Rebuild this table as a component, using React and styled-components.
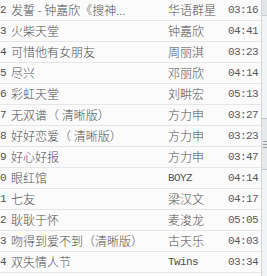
import React from "react";
import styled, { createGlobalStyle } from "styled-components";

const Global = createGlobalStyle`
  html, body { margin: 0; padding: 0; background: #ffffff; }
  body { font-family: "Noto Sans CJK SC", "Noto Sans", sans-serif; }
`;

const Frame = styled.div`
  width: 267px;
  height: 276px;
  overflow: hidden;
  display: flex;
  background: #fdfdfd;
`;

const List = styled.ul`
  flex: 1;
  margin: 0;
  padding: 0;
  list-style: none;
`;

const Row = styled.li`
  display: grid;
  grid-template-columns: 11px 157px 60px 30px;
  align-items: center;
  height: 20px;
  border-bottom: 1px solid #e4e6e8;
  background: #fbfbfb;
  color: #505050;
`;

const Index = styled.span`
  font-family: "Liberation Mono", monospace;
  font-size: 11px;
  letter-spacing: -0.6px;
  padding-left: 0;
  white-space: nowrap;
  line-height: 20px;
`;

const Title = styled.span`
  font-family: "Noto Sans CJK SC", "Noto Sans", sans-serif;
  font-size: 12px;
  font-weight: 300;
  line-height: 20px;
  white-space: nowrap;
`;

const Artist = styled.span`
  font-family: ${(p) => (p.$latin ? '"Liberation Mono", monospace' : '"Noto Sans CJK SC", sans-serif')};
  font-size: ${(p) => (p.$latin ? "11px" : "12px")};
  font-weight: ${(p) => (p.$latin ? 400 : 300)};
  letter-spacing: ${(p) => (p.$latin ? "-0.6px" : "0")};
  line-height: 20px;
  white-space: nowrap;
`;

const Time = styled.span`
  font-family: "Liberation Mono", monospace;
  font-size: 11px;
  letter-spacing: -0.6px;
  line-height: 20px;
  color: #5a5a5a;
`;

const Scroll = styled.div`
  width: 5px;
  flex: none;
  position: relative;
  background: #f2f3f4;
  border-left: 1px solid #d4d6d8;
  display: flex;
  flex-direction: column;
`;

const Cap = styled.div`
  height: 15px;
  background: #e2e4e6;
  border-bottom: 1px solid #c8cacc;
`;

const Thumb = styled.div`
  position: absolute;
  left: 0;
  right: 0;
  top: 118px;
  height: 50px;
  background: #e6e8ea;
  border-top: 1px solid #c4c6c8;
  border-bottom: 1px solid #c4c6c8;
  display: flex;
  flex-direction: column;
  justify-content: center;
  gap: 2px;
`;

const Grip = styled.div`
  height: 1px;
  margin-left: 1px;
  background: #9a9ca0;
`;

const songs = [
  ["2", "发誓 - 钟嘉欣《搜神...", "华语群星", "03:16"],
  ["3", "火柴天堂", "钟嘉欣", "04:41"],
  ["4", "可惜他有女朋友", "周丽淇", "03:23"],
  ["5", "尽兴", "邓丽欣", "04:14"],
  ["6", "彩虹天堂", "刘畊宏", "05:13"],
  ["7", "无双谱（ 清晰版）", "方力申", "03:27"],
  ["8", "好好恋爱（ 清晰版）", "方力申", "03:23"],
  ["9", "好心好报", "方力申", "03:47"],
  ["0", "眼红馆", "BOYZ", "04:14", true],
  ["1", "七友", "梁汉文", "04:17"],
  ["2", "耿耿于怀", "麦浚龙", "05:05"],
  ["3", "吻得到爱不到（清晰版）", "古天乐", "04:03"],
  ["4", "双失情人节", "Twins", "03:34", true],
];

export default function App() {
  return (
    <>
      <Global />
      <Frame>
        <List>
          {songs.map(([n, t, a, d, latin], i) => (
            <Row key={i}>
              <Index>{n}</Index>
              <Title>{t}</Title>
              <Artist $latin={latin}>{a}</Artist>
              <Time>{d}</Time>
            </Row>
          ))}
        </List>
        <Scroll>
          <Cap />
          <Thumb>
            <Grip />
            <Grip />
            <Grip />
          </Thumb>
        </Scroll>
      </Frame>
    </>
  );
}
